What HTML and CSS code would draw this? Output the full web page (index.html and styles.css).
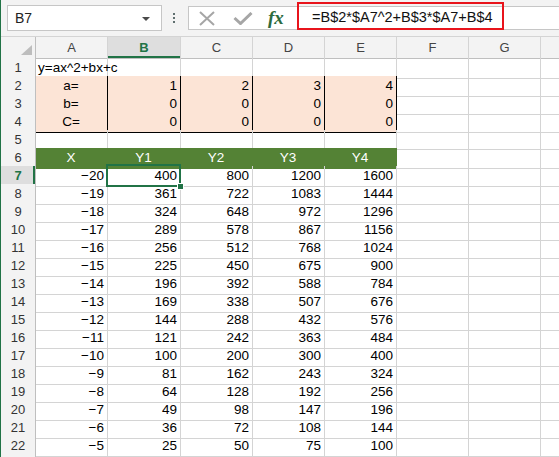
FILE: index.html
```html
<!DOCTYPE html>
<html lang="ja">

<head>
    <meta charset="UTF-8">
    <title>Sheet1</title>
    <link rel="stylesheet" href="styles.css">
</head>

<body>
    <div class="app">
        <div class="toolbar">
            <div class="namebox">
                <span>B7</span>
                <span class="caret"></span>
            </div>
            <div class="grip"><i></i><i></i><i></i></div>
            <div class="fbar">
                <span class="fbtn cancel">
                    <svg width="16" height="15" viewBox="0 0 16 15">
                        <path d="M1 1 L15 14 M15 1 L1 14" stroke="#a6a6a6" stroke-width="2" fill="none" />
                    </svg>
                </span>
                <span class="fbtn enter">
                    <svg width="20" height="13" viewBox="0 0 20 13">
                        <path d="M1.5 6 L7.5 11.5 L18.5 1" stroke="#a6a6a6" stroke-width="3" fill="none" />
                    </svg>
                </span>
                <span class="fx">fx</span>
                <div class="formula">=B$2*$A7^2+B$3*$A7+B$4</div>
            </div>
        </div>

        <div class="sheet">
            <div class="row hdr">
                <div class="corner">
                    <svg width="11" height="10" viewBox="0 0 11 10">
                        <polygon points="11,0 11,10 0,10" fill="#bdbdbd" />
                    </svg>
                </div>
                <div class="hc">A</div>
                <div class="hc sel">B</div>
                <div class="hc">C</div>
                <div class="hc">D</div>
                <div class="hc">E</div>
                <div class="hc">F</div>
                <div class="hc">G</div>
                <div class="hc"></div>
            </div>

            <div class="row">
                <div class="rh">1</div>
                <div class="c bb">y=ax^2+bx+c</div>
                <div class="c bb"></div>
                <div class="c bb"></div>
                <div class="c bb"></div>
                <div class="c bb"></div>
                <div class="c"></div>
                <div class="c"></div>
                <div class="c"></div>
            </div>
            <div class="row">
                <div class="rh">2</div>
                <div class="c p ctr">a=</div>
                <div class="c p n">1</div>
                <div class="c p n">2</div>
                <div class="c p n">3</div>
                <div class="c p n">4</div>
                <div class="c"></div>
                <div class="c"></div>
                <div class="c"></div>
            </div>
            <div class="row">
                <div class="rh">3</div>
                <div class="c p ctr">b=</div>
                <div class="c p n">0</div>
                <div class="c p n">0</div>
                <div class="c p n">0</div>
                <div class="c p n">0</div>
                <div class="c"></div>
                <div class="c"></div>
                <div class="c"></div>
            </div>
            <div class="row">
                <div class="rh">4</div>
                <div class="c p ctr">C=</div>
                <div class="c p n">0</div>
                <div class="c p n">0</div>
                <div class="c p n">0</div>
                <div class="c p n">0</div>
                <div class="c"></div>
                <div class="c"></div>
                <div class="c"></div>
            </div>
            <div class="row">
                <div class="rh">5</div>
                <div class="c"></div>
                <div class="c"></div>
                <div class="c"></div>
                <div class="c"></div>
                <div class="c"></div>
                <div class="c"></div>
                <div class="c"></div>
                <div class="c"></div>
            </div>
            <div class="row">
                <div class="rh">6</div>
                <div class="c g">X</div>
                <div class="c g">Y1</div>
                <div class="c g">Y2</div>
                <div class="c g">Y3</div>
                <div class="c g">Y4</div>
                <div class="c"></div>
                <div class="c"></div>
                <div class="c"></div>
            </div>
            <div class="row">
                <div class="rh sel">7</div>
                <div class="c n">&minus;20</div>
                <div class="c n active">400</div>
                <div class="c n">800</div>
                <div class="c n">1200</div>
                <div class="c n">1600</div>
                <div class="c"></div>
                <div class="c"></div>
                <div class="c"></div>
            </div>
            <div class="row">
                <div class="rh">8</div>
                <div class="c n">&minus;19</div>
                <div class="c n">361</div>
                <div class="c n">722</div>
                <div class="c n">1083</div>
                <div class="c n">1444</div>
                <div class="c"></div>
                <div class="c"></div>
                <div class="c"></div>
            </div>
            <div class="row">
                <div class="rh">9</div>
                <div class="c n">&minus;18</div>
                <div class="c n">324</div>
                <div class="c n">648</div>
                <div class="c n">972</div>
                <div class="c n">1296</div>
                <div class="c"></div>
                <div class="c"></div>
                <div class="c"></div>
            </div>
            <div class="row">
                <div class="rh">10</div>
                <div class="c n">&minus;17</div>
                <div class="c n">289</div>
                <div class="c n">578</div>
                <div class="c n">867</div>
                <div class="c n">1156</div>
                <div class="c"></div>
                <div class="c"></div>
                <div class="c"></div>
            </div>
            <div class="row">
                <div class="rh">11</div>
                <div class="c n">&minus;16</div>
                <div class="c n">256</div>
                <div class="c n">512</div>
                <div class="c n">768</div>
                <div class="c n">1024</div>
                <div class="c"></div>
                <div class="c"></div>
                <div class="c"></div>
            </div>
            <div class="row">
                <div class="rh">12</div>
                <div class="c n">&minus;15</div>
                <div class="c n">225</div>
                <div class="c n">450</div>
                <div class="c n">675</div>
                <div class="c n">900</div>
                <div class="c"></div>
                <div class="c"></div>
                <div class="c"></div>
            </div>
            <div class="row">
                <div class="rh">13</div>
                <div class="c n">&minus;14</div>
                <div class="c n">196</div>
                <div class="c n">392</div>
                <div class="c n">588</div>
                <div class="c n">784</div>
                <div class="c"></div>
                <div class="c"></div>
                <div class="c"></div>
            </div>
            <div class="row">
                <div class="rh">14</div>
                <div class="c n">&minus;13</div>
                <div class="c n">169</div>
                <div class="c n">338</div>
                <div class="c n">507</div>
                <div class="c n">676</div>
                <div class="c"></div>
                <div class="c"></div>
                <div class="c"></div>
            </div>
            <div class="row">
                <div class="rh">15</div>
                <div class="c n">&minus;12</div>
                <div class="c n">144</div>
                <div class="c n">288</div>
                <div class="c n">432</div>
                <div class="c n">576</div>
                <div class="c"></div>
                <div class="c"></div>
                <div class="c"></div>
            </div>
            <div class="row">
                <div class="rh">16</div>
                <div class="c n">&minus;11</div>
                <div class="c n">121</div>
                <div class="c n">242</div>
                <div class="c n">363</div>
                <div class="c n">484</div>
                <div class="c"></div>
                <div class="c"></div>
                <div class="c"></div>
            </div>
            <div class="row">
                <div class="rh">17</div>
                <div class="c n">&minus;10</div>
                <div class="c n">100</div>
                <div class="c n">200</div>
                <div class="c n">300</div>
                <div class="c n">400</div>
                <div class="c"></div>
                <div class="c"></div>
                <div class="c"></div>
            </div>
            <div class="row">
                <div class="rh">18</div>
                <div class="c n">&minus;9</div>
                <div class="c n">81</div>
                <div class="c n">162</div>
                <div class="c n">243</div>
                <div class="c n">324</div>
                <div class="c"></div>
                <div class="c"></div>
                <div class="c"></div>
            </div>
            <div class="row">
                <div class="rh">19</div>
                <div class="c n">&minus;8</div>
                <div class="c n">64</div>
                <div class="c n">128</div>
                <div class="c n">192</div>
                <div class="c n">256</div>
                <div class="c"></div>
                <div class="c"></div>
                <div class="c"></div>
            </div>
            <div class="row">
                <div class="rh">20</div>
                <div class="c n">&minus;7</div>
                <div class="c n">49</div>
                <div class="c n">98</div>
                <div class="c n">147</div>
                <div class="c n">196</div>
                <div class="c"></div>
                <div class="c"></div>
                <div class="c"></div>
            </div>
            <div class="row">
                <div class="rh">21</div>
                <div class="c n">&minus;6</div>
                <div class="c n">36</div>
                <div class="c n">72</div>
                <div class="c n">108</div>
                <div class="c n">144</div>
                <div class="c"></div>
                <div class="c"></div>
                <div class="c"></div>
            </div>
            <div class="row">
                <div class="rh">22</div>
                <div class="c n">&minus;5</div>
                <div class="c n">25</div>
                <div class="c n">50</div>
                <div class="c n">75</div>
                <div class="c n">100</div>
                <div class="c"></div>
                <div class="c"></div>
                <div class="c"></div>
            </div>
            <div class="row">
                <div class="rh"></div>
                <div class="c"></div>
                <div class="c"></div>
                <div class="c"></div>
                <div class="c"></div>
                <div class="c"></div>
                <div class="c"></div>
                <div class="c"></div>
                <div class="c"></div>
            </div>
        </div>
    </div>
</body>

</html>
```

FILE: styles.css
```css
body {
    margin: 0;
    font-family: "Liberation Sans", Arial, sans-serif;
    background-color: #ffffff;
    overflow: hidden;
}

.app {
    width: 559px;
    height: 457px;
    overflow: hidden;
    box-sizing: border-box;
    border-left: 1px solid #217346;
}

/* formula bar */
.toolbar {
    display: flex;
    height: 37px;
    box-sizing: border-box;
    padding-left: 6px;
    background-color: #f3f3f3;
    border-bottom: 1px solid #d4d4d4;
}

.namebox {
    display: flex;
    align-items: center;
    justify-content: space-between;
    flex: none;
    width: 155px;
    height: 26px;
    margin-top: 5px;
    padding: 0 11px 0 7px;
    box-sizing: border-box;
    background: white;
    border: 1px solid #c6c6c6;
    font-size: 14px;
    color: #222;
}

.caret {
    border-left: 4px solid transparent;
    border-right: 4px solid transparent;
    border-top: 4px solid #4a4a4a;
    margin-top: 1px;
}

.grip {
    display: flex;
    flex-direction: column;
    gap: 2px;
    margin: 13px 13px 0 11px;
}

.grip i {
    display: block;
    width: 2px;
    height: 2px;
    background-color: #5f6f6f;
}

.fbar {
    display: flex;
    align-items: center;
    flex: 1;
    height: 24px;
    margin-top: 6px;
    box-sizing: border-box;
    background: white;
    border: 1px solid #c6c6c6;
    border-right: none;
}

.fbtn {
    display: flex;
}

.cancel {
    margin-left: 10px;
}

.enter {
    margin-left: 18px;
}

.fx {
    width: 20px;
    margin-left: 15px;
    font-family: "Liberation Serif", serif;
    font-style: italic;
    font-weight: bold;
    font-size: 19px;
    line-height: 20px;
    color: #2c6b40;
}

.formula {
    align-self: flex-start;
    width: 207px;
    height: 28px;
    margin: -5px 0 0 9px;
    padding: 3px 0 0 13px;
    box-sizing: border-box;
    border: 2px solid #e8141c;
    font-size: 14.5px;
    line-height: 21px;
    color: #111;
    white-space: nowrap;
}

/* grid */
.row {
    display: grid;
    grid-template-columns: 35px 72px 73px repeat(6, 72px);
    height: 18px;
}

.row.hdr {
    height: 21px;
}

.corner {
    display: flex;
    align-items: flex-end;
    justify-content: flex-end;
    padding: 0 3px 3px 0;
    background-color: #f3f3f3;
    border-right: 1px solid #bfbfbf;
    border-bottom: 1px solid #bfbfbf;
}

.hc {
    background-color: #f3f3f3;
    border-right: 1px solid #d4d4d4;
    border-bottom: 1px solid #bfbfbf;
    text-align: center;
    font-size: 13px;
    line-height: 21px;
    color: #444;
}

.hc.sel {
    background-color: #dedede;
    color: #217346;
    font-weight: bold;
    box-shadow: inset 0 -2px 0 #217346;
}

.rh {
    background-color: #f3f3f3;
    border-right: 1px solid #bfbfbf;
    border-bottom: 1px solid #d4d4d4;
    text-align: center;
    font-size: 13px;
    line-height: 19px;
    color: #333;
}

.rh.sel {
    background-color: #dedede;
    color: #217346;
    font-weight: bold;
    box-shadow: inset -2px 0 0 #217346;
}

.c {
    box-sizing: border-box;
    padding: 0 3px 0 2px;
    border-right: 1px solid #d4d4d4;
    border-bottom: 1px solid #d4d4d4;
    font-size: 13.5px;
    line-height: 20px;
    white-space: nowrap;
    color: #000;
}

.n {
    text-align: right;
}

.ctr {
    text-align: center;
}

.bb {
    border-bottom-color: #000;
}

.p {
    background-color: #fce4d6;
    border-right-color: #000;
    border-bottom-color: #000;
}

.g {
    background-color: #548235;
    border-right-color: #548235;
    border-bottom-color: #548235;
    color: white;
    text-align: center;
}

.active {
    position: relative;
}

.active::after {
    content: "";
    position: absolute;
    left: -2px;
    top: -2px;
    right: -1px;
    bottom: -1px;
    border: 2px solid #217346;
}

.active::before {
    content: "";
    position: absolute;
    right: -4px;
    bottom: -4px;
    width: 7px;
    height: 7px;
    box-sizing: border-box;
    background-color: #217346;
    border: 1px solid white;
    z-index: 1;
}
```
